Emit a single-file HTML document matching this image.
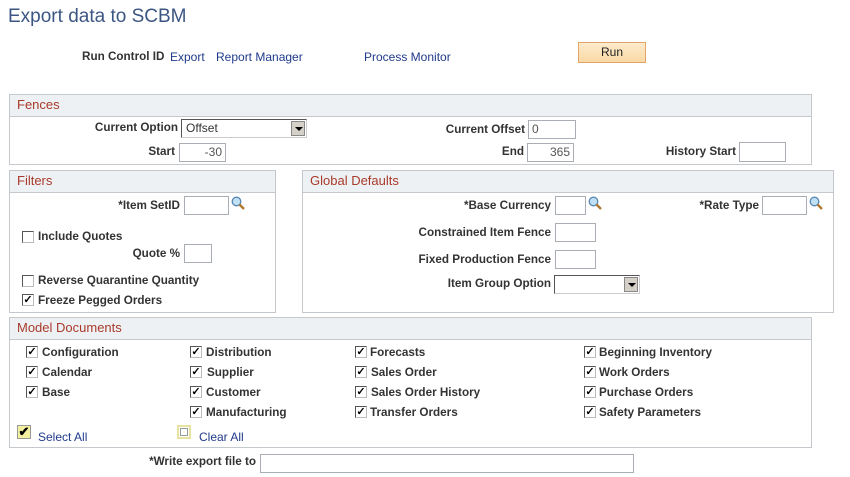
<!DOCTYPE html>
<html><head><style>
body{margin:0;width:850px;height:477px;background:#fff;font-family:"Liberation Sans",Arial,sans-serif;position:relative;overflow:hidden}
.a{position:absolute;white-space:nowrap}
.l{font-size:11.7px;font-weight:bold;color:#333;line-height:14px}
.r{text-align:right}
.lk{font-size:12px;color:#1f3a8a;line-height:14px}
.box{position:absolute;border:1px solid #c5c9ce;box-sizing:border-box}
.hd{position:absolute;left:0;right:0;top:0;height:21px;background:#eef1f4;border-bottom:1px solid #c5c9ce;color:#a83a2a;font-size:13px;line-height:20px;padding-left:7px}
.in{position:absolute;border:1px solid #a8aeb3;box-sizing:border-box;background:#fff;font-size:12px;color:#555;line-height:16px;text-align:right;padding-right:3px}
.sel{position:absolute;border:1px solid #555;border-right-color:#ccc;border-bottom-color:#ccc;box-sizing:border-box;background:#fff;font-size:12px;color:#333;line-height:17px;padding-left:4px}
.sel i{position:absolute;right:1px;top:1px;width:14px;height:15px;background:#d4d0c8;border:1px solid #888;box-sizing:border-box}
.sel i:after{content:"";position:absolute;left:3px;top:5px;border-left:4px solid transparent;border-right:4px solid transparent;border-top:4px solid #000}
.cb{position:absolute;width:12px;height:12px;border:1px solid #555;border-right-color:#bbb;border-bottom-color:#bbb;box-sizing:border-box;background:#fff;font-size:11px;line-height:10px;text-align:center;color:#000;font-weight:bold}
.mg{position:absolute;width:14px;height:14px}
</style></head><body>
<div class="a" style="left:8px;top:6px;font-size:19px;color:#3c5683">Export data to SCBM</div>
<div class="a l" style="left:82px;top:50px">Run Control ID</div>
<div class="a lk" style="left:170px;top:50px">Export</div>
<div class="a lk" style="left:216px;top:50px">Report Manager</div>
<div class="a lk" style="left:364px;top:50px">Process Monitor</div>
<div class="a" style="left:578px;top:42px;width:68px;height:21px;box-sizing:border-box;border:1px solid #e0a468;background:linear-gradient(#fdeccc,#fbd9a5);font-size:12px;text-align:center;line-height:19px;color:#222">Run</div>

<div class="box" style="left:9px;top:94px;width:803px;height:71px"><div class="hd">Fences</div></div>
<div class="a l r" style="left:60px;width:118px;top:121px">Current Option</div>
<div class="sel" style="left:181px;top:119px;width:126px;height:19px">Offset<i></i></div>
<div class="a l r" style="left:400px;width:125px;top:123px">Current Offset</div>
<div class="in" style="left:528px;top:120px;width:48px;height:19px;text-align:left;padding-left:3px">0</div>
<div class="a l r" style="left:100px;width:75px;top:145px">Start</div>
<div class="in" style="left:179px;top:143px;width:47px;height:19px">-30</div>
<div class="a l r" style="left:450px;width:74px;top:145px">End</div>
<div class="in" style="left:527px;top:143px;width:47px;height:19px">365</div>
<div class="a l r" style="left:600px;width:136px;top:145px">History Start</div>
<div class="in" style="left:739px;top:142px;width:47px;height:20px"></div>

<div class="box" style="left:9px;top:170px;width:267px;height:143px"><div class="hd">Filters</div></div>
<div class="box" style="left:302px;top:170px;width:532px;height:143px"><div class="hd">Global Defaults</div></div>

<div class="a l r" style="left:60px;width:120px;top:199px">*Item SetID</div>
<div class="in" style="left:184px;top:196px;width:45px;height:19px"></div>
<svg class="mg" style="left:231px;top:196px" viewBox="0 0 14 14"><circle cx="5.5" cy="5.5" r="4.3" fill="#bfe0f5" stroke="#5a86b0" stroke-width="1.3"/><path d="M8.5 8.5L13 13" stroke="#b07a30" stroke-width="2.4"/></svg>
<div class="cb" style="left:22px;top:231px"></div><div class="a l" style="left:38px;top:230px">Include Quotes</div>
<div class="a l r" style="left:80px;width:100px;top:247px">Quote %</div>
<div class="in" style="left:184px;top:244px;width:28px;height:19px"></div>
<div class="cb" style="left:22px;top:275px"></div><div class="a l" style="left:38px;top:274px">Reverse Quarantine Quantity</div>
<div class="cb" style="left:22px;top:294px">✓</div><div class="a l" style="left:38px;top:294px">Freeze Pegged Orders</div>

<div class="a l r" style="left:400px;width:151px;top:199px">*Base Currency</div>
<div class="in" style="left:555px;top:196px;width:31px;height:19px"></div>
<svg class="mg" style="left:588px;top:196px" viewBox="0 0 14 14"><circle cx="5.5" cy="5.5" r="4.3" fill="#bfe0f5" stroke="#5a86b0" stroke-width="1.3"/><path d="M8.5 8.5L13 13" stroke="#b07a30" stroke-width="2.4"/></svg>
<div class="a l r" style="left:660px;width:99px;top:199px">*Rate Type</div>
<div class="in" style="left:762px;top:196px;width:45px;height:19px"></div>
<svg class="mg" style="left:809px;top:196px" viewBox="0 0 14 14"><circle cx="5.5" cy="5.5" r="4.3" fill="#bfe0f5" stroke="#5a86b0" stroke-width="1.3"/><path d="M8.5 8.5L13 13" stroke="#b07a30" stroke-width="2.4"/></svg>
<div class="a l r" style="left:380px;width:171px;top:226px">Constrained Item Fence</div>
<div class="in" style="left:555px;top:223px;width:41px;height:19px"></div>
<div class="a l r" style="left:380px;width:171px;top:253px">Fixed Production Fence</div>
<div class="in" style="left:555px;top:250px;width:41px;height:19px"></div>
<div class="a l r" style="left:380px;width:171px;top:277px">Item Group Option</div>
<div class="sel" style="left:554px;top:275px;width:86px;height:19px"><i></i></div>

<div class="box" style="left:9px;top:317px;width:803px;height:131px"><div class="hd">Model Documents</div></div>
<div class="cb" style="left:26px;top:346px">✓</div><div class="a l" style="left:42px;top:346px">Configuration</div>
<div class="cb" style="left:26px;top:366px">✓</div><div class="a l" style="left:42px;top:366px">Calendar</div>
<div class="cb" style="left:26px;top:386px">✓</div><div class="a l" style="left:42px;top:386px">Base</div>
<div class="cb" style="left:190px;top:346px">✓</div><div class="a l" style="left:206px;top:346px">Distribution</div>
<div class="cb" style="left:190px;top:366px">✓</div><div class="a l" style="left:207px;top:366px">Supplier</div>
<div class="cb" style="left:190px;top:386px">✓</div><div class="a l" style="left:206px;top:386px">Customer</div>
<div class="cb" style="left:190px;top:406px">✓</div><div class="a l" style="left:206px;top:406px">Manufacturing</div>
<div class="cb" style="left:355px;top:346px">✓</div><div class="a l" style="left:370px;top:346px">Forecasts</div>
<div class="cb" style="left:355px;top:366px">✓</div><div class="a l" style="left:371px;top:366px">Sales Order</div>
<div class="cb" style="left:355px;top:386px">✓</div><div class="a l" style="left:371px;top:386px">Sales Order History</div>
<div class="cb" style="left:355px;top:406px">✓</div><div class="a l" style="left:370px;top:406px">Transfer Orders</div>
<div class="cb" style="left:584px;top:346px">✓</div><div class="a l" style="left:599px;top:346px">Beginning Inventory</div>
<div class="cb" style="left:584px;top:366px">✓</div><div class="a l" style="left:599px;top:366px">Work Orders</div>
<div class="cb" style="left:584px;top:386px">✓</div><div class="a l" style="left:599px;top:386px">Purchase Orders</div>
<div class="cb" style="left:584px;top:406px">✓</div><div class="a l" style="left:599px;top:406px">Safety Parameters</div>
<div class="a" style="left:17px;top:425px;width:14px;height:14px;box-sizing:border-box;border:1px solid #999;background:#f3f0a0;font-size:13px;line-height:11px;font-weight:bold;text-align:center">✔</div>
<div class="a lk" style="left:38px;top:430px">Select All</div>
<div class="a" style="left:177px;top:425px;width:14px;height:14px;box-sizing:border-box;border:2px solid #e8e4a0;outline:1px solid #999;outline-offset:-4px;background:#fff"></div>
<div class="a lk" style="left:199px;top:430px">Clear All</div>

<div class="a l r" style="left:100px;width:156px;top:455px">*Write export file to</div>
<div class="in" style="left:260px;top:454px;width:374px;height:19px"></div>
</body></html>
